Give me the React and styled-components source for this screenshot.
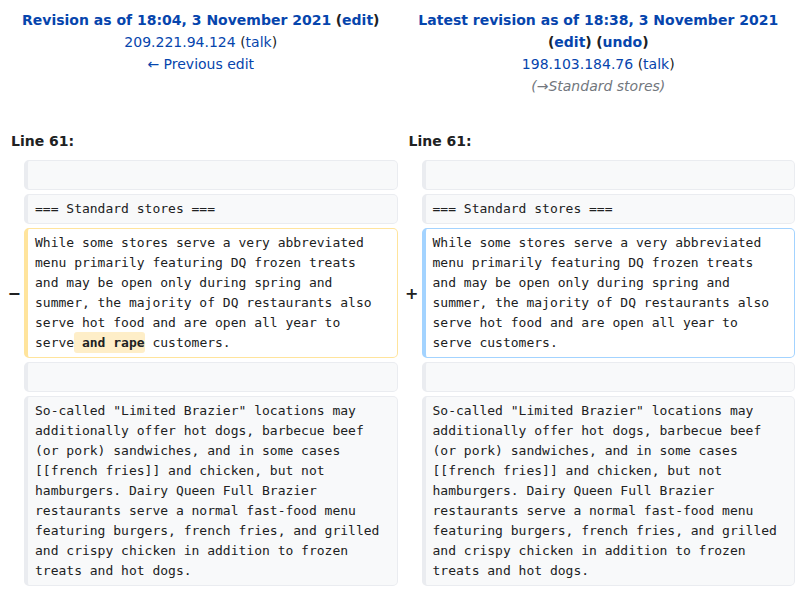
import React from 'react';
import styled, { createGlobalStyle } from 'styled-components';

const GlobalStyle = createGlobalStyle`
  html, body { margin: 0; padding: 0; background: #fff; }
  body {
    font-family: "DejaVu Sans", sans-serif;
    font-size: 14px;
    color: #202122;
  }
`;

const DiffTable = styled.div`
  display: grid;
  grid-template-columns: 24px 1fr 24px 1fr;
  row-gap: 4px;
  padding: 9px 4px 0 0;
  width: 799px;
  box-sizing: border-box;
`;

const Title = styled.div`
  grid-column: span 2;
  text-align: center;
  line-height: 22px;
  padding: 0 0 29px 4px;
`;

const Link = styled.a`
  color: #0645ad;
  text-decoration: none;
  font-weight: ${(p) => (p.$bold ? 'bold' : 'normal')};
`;

const Strong = styled.span`
  font-weight: bold;
`;

const Comment = styled.div`
  font-style: italic;
  color: #72777d;
`;

const LineNo = styled.div`
  grid-column: span 2;
  font-weight: bold;
  line-height: 22px;
  padding: 0 0 4px 11px;
`;

const Marker = styled.div`
  display: flex;
  align-items: center;
  justify-content: flex-end;
  padding-right: 3px;
  font-family: "DejaVu Sans", sans-serif;
  font-weight: bold;
  font-size: 16px;
  color: #202122;
`;

const borders = {
  context: '#eaecf0',
  deleted: '#ffe49c',
  added: '#a3d3ff',
};

const Content = styled.div`
  font-family: "DejaVu Sans Mono", monospace;
  font-size: 13px;
  line-height: 20px;
  min-height: 20px;
  padding: 4px 12px 4px 7px;
  white-space: pre-wrap;
  word-wrap: break-word;
  background: ${(p) => (p.$kind === 'context' ? '#f8f9fa' : '#fff')};
  color: #202122;
  border: 1px solid ${(p) => borders[p.$kind]};
  border-left-width: 4px;
  border-radius: 5px;
`;

const DelInline = styled.span`
  font-weight: bold;
  background: #feeec8;
  border-radius: 3px;
  padding: 3px 0;
`;

const para1 =
  'While some stores serve a very abbreviated menu primarily featuring DQ frozen treats and may be open only during spring and summer, the majority of DQ restaurants also serve hot food and are open all year to serve';

const para2 =
  'So-called "Limited Brazier" locations may additionally offer hot dogs, barbecue beef (or pork) sandwiches, and in some cases [[french fries]] and chicken, but not hamburgers. Dairy Queen Full Brazier restaurants serve a normal fast-food menu featuring burgers, french fries, and grilled and crispy chicken in addition to frozen treats and hot dogs.';

const ContextRow = ({ text }) => (
  <>
    <Marker />
    <Content $kind="context">{text}</Content>
    <Marker />
    <Content $kind="context">{text}</Content>
  </>
);

export default function App() {
  return (
    <>
      <GlobalStyle />
      <DiffTable>
        <Title>
          <div>
            <Link $bold href="#">Revision as of 18:04, 3 November 2021</Link>{' '}
            <Strong>(<Link $bold href="#">edit</Link>)</Strong>
          </div>
          <div>
            <Link href="#">209.221.94.124</Link> (<Link href="#">talk</Link>)
          </div>
          <div>
            <Link href="#">← Previous edit</Link>
          </div>
        </Title>
        <Title>
          <div>
            <Link $bold href="#">Latest revision as of 18:38, 3 November 2021</Link>{' '}
            <Strong>(<Link $bold href="#">edit</Link>)</Strong>{' '}
            <Strong>(<Link $bold href="#">undo</Link>)</Strong>
          </div>
          <div>
            <Link href="#">198.103.184.76</Link> (<Link href="#">talk</Link>)
          </div>
          <Comment>(→Standard stores)</Comment>
        </Title>

        <LineNo>Line 61:</LineNo>
        <LineNo>Line 61:</LineNo>

        <ContextRow text="" />
        <ContextRow text="=== Standard stores ===" />

        <Marker>−</Marker>
        <Content $kind="deleted">
          {para1}
          <DelInline> and rape</DelInline>
          {' customers.'}
        </Content>
        <Marker>+</Marker>
        <Content $kind="added">{para1 + ' customers.'}</Content>

        <ContextRow text="" />
        <ContextRow text={para2} />
      </DiffTable>
    </>
  );
}
